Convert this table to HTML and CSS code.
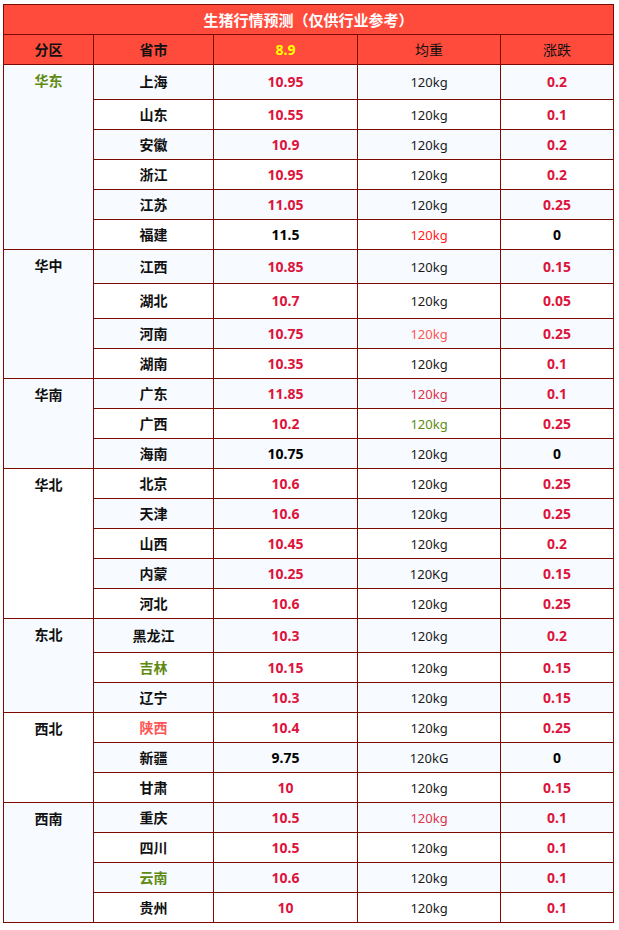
FILE: index.html
```html
<!DOCTYPE html>
<html lang="zh-CN">
<head>
<meta charset="utf-8">
<title>生猪行情预测</title>
<link rel="stylesheet" href="styles.css">
</head>
<body>
<table class="price">
  <colgroup>
    <col class="c-zone"><col class="c-prov"><col class="c-price"><col class="c-weight"><col class="c-change">
  </colgroup>
  <tr class="title"><td colspan="5">生猪行情预测（仅供行业参考）</td></tr>
  <tr class="head">
    <td class="b">分区</td><td class="b">省市</td><td class="b yellow">8.9</td><td>均重</td><td>涨跌</td>
  </tr>

  <tr class="odd h35"><td class="zone odd green" rowspan="6">华东</td><td class="prov">上海</td><td class="num">10.95</td><td class="w">120kg</td><td class="num">0.2</td></tr>
  <tr class="even"><td class="prov">山东</td><td class="num">10.55</td><td class="w">120kg</td><td class="num">0.1</td></tr>
  <tr class="odd"><td class="prov">安徽</td><td class="num">10.9</td><td class="w">120kg</td><td class="num">0.2</td></tr>
  <tr class="even"><td class="prov">浙江</td><td class="num">10.95</td><td class="w">120kg</td><td class="num">0.2</td></tr>
  <tr class="odd"><td class="prov">江苏</td><td class="num">11.05</td><td class="w">120kg</td><td class="num">0.25</td></tr>
  <tr class="even"><td class="prov">福建</td><td class="num black">11.5</td><td class="w red">120kg</td><td class="num black">0</td></tr>

  <tr class="odd h34"><td class="zone odd" rowspan="4">华中</td><td class="prov">江西</td><td class="num">10.85</td><td class="w">120kg</td><td class="num">0.15</td></tr>
  <tr class="even h35"><td class="prov">湖北</td><td class="num">10.7</td><td class="w">120kg</td><td class="num">0.05</td></tr>
  <tr class="odd"><td class="prov">河南</td><td class="num">10.75</td><td class="w light">120kg</td><td class="num">0.25</td></tr>
  <tr class="even"><td class="prov">湖南</td><td class="num">10.35</td><td class="w">120kg</td><td class="num">0.1</td></tr>

  <tr class="odd"><td class="zone odd" rowspan="3">华南</td><td class="prov">广东</td><td class="num">11.85</td><td class="w crim">120kg</td><td class="num">0.1</td></tr>
  <tr class="even"><td class="prov">广西</td><td class="num">10.2</td><td class="w green">120kg</td><td class="num">0.25</td></tr>
  <tr class="odd"><td class="prov">海南</td><td class="num black">10.75</td><td class="w">120kg</td><td class="num black">0</td></tr>

  <tr class="even"><td class="zone even" rowspan="5">华北</td><td class="prov">北京</td><td class="num">10.6</td><td class="w">120kg</td><td class="num">0.25</td></tr>
  <tr class="odd"><td class="prov">天津</td><td class="num">10.6</td><td class="w">120kg</td><td class="num">0.25</td></tr>
  <tr class="even"><td class="prov">山西</td><td class="num">10.45</td><td class="w">120kg</td><td class="num">0.2</td></tr>
  <tr class="odd"><td class="prov">内蒙</td><td class="num">10.25</td><td class="w">120Kg</td><td class="num">0.15</td></tr>
  <tr class="even"><td class="prov">河北</td><td class="num">10.6</td><td class="w">120kg</td><td class="num">0.25</td></tr>

  <tr class="odd h34"><td class="zone odd" rowspan="3">东北</td><td class="prov">黑龙江</td><td class="num">10.3</td><td class="w">120kg</td><td class="num">0.2</td></tr>
  <tr class="even"><td class="prov green">吉林</td><td class="num">10.15</td><td class="w">120kg</td><td class="num">0.15</td></tr>
  <tr class="odd"><td class="prov">辽宁</td><td class="num">10.3</td><td class="w">120kg</td><td class="num">0.15</td></tr>

  <tr class="even"><td class="zone even" rowspan="3">西北</td><td class="prov light">陕西</td><td class="num">10.4</td><td class="w">120kg</td><td class="num">0.25</td></tr>
  <tr class="odd"><td class="prov">新疆</td><td class="num black">9.75</td><td class="w">120kG</td><td class="num black">0</td></tr>
  <tr class="even"><td class="prov">甘肃</td><td class="num">10</td><td class="w">120kg</td><td class="num">0.15</td></tr>

  <tr class="odd"><td class="zone odd" rowspan="4">西南</td><td class="prov">重庆</td><td class="num">10.5</td><td class="w crim">120kg</td><td class="num">0.1</td></tr>
  <tr class="even"><td class="prov">四川</td><td class="num">10.5</td><td class="w">120kg</td><td class="num">0.1</td></tr>
  <tr class="odd"><td class="prov green">云南</td><td class="num">10.6</td><td class="w">120kg</td><td class="num">0.1</td></tr>
  <tr class="even"><td class="prov">贵州</td><td class="num">10</td><td class="w">120kg</td><td class="num">0.1</td></tr>
</table>
</body>
</html>
```

FILE: styles.css
```css
html, body {
  margin: 0;
  padding: 0;
  background: #ffffff;
}
body {
  padding: 4px 0 0 3px;
  font-family: "Noto Sans", "Noto Sans CJK SC", sans-serif;
  font-size: 13px;
  color: #111111;
}
.price {
  border-collapse: collapse;
  table-layout: fixed;
  width: 610px;
}
.c-zone { width: 90px; }
.c-prov { width: 120px; }
.c-price { width: 144px; }
.c-weight { width: 143px; }
.c-change { width: 113px; }

.price td {
  border: 1px solid #7d0a00;
  text-align: center;
  vertical-align: middle;
  padding: 0;
  line-height: 18px;
}
.price tr { height: 30px; }
.price tr.h35 { height: 35px; }
.price tr.h34 { height: 34px; }

.title td {
  background: #ff4b3c;
  color: #ffffff;
  font-weight: bold;
  font-size: 15px;
  font-family: "Noto Sans CJK SC", sans-serif;
}
.head td {
  background: #ff4b3c;
  color: #111111;
  font-size: 14px;
  font-family: "Noto Sans", "Noto Sans CJK SC", sans-serif;
}
.head td.b { font-weight: bold; }
.head td.yellow { color: #ffff00; }

tr.odd td { background: #f7fbff; }
tr.even td { background: #ffffff; }
.price td.zone.odd { background: #f7fbff; }
.price td.zone.even { background: #ffffff; }

.zone {
  font-weight: bold;
  font-size: 14px;
}
.price td.zone {
  vertical-align: top;
  padding-top: 7px;
}
.prov {
  font-weight: bold;
  font-size: 14px;
}
.num {
  font-weight: bold;
  font-size: 14px;
  color: #dc143c;
}
.w {
  font-size: 13px;
  color: #1a1a1a;
}
.price .black { color: #000000; }
.price .red { color: #ff1a1a; }
.price .light { color: #ff5555; }
.price .crim { color: #e0304a; }
.price .green { color: #5f8a12; }
```
